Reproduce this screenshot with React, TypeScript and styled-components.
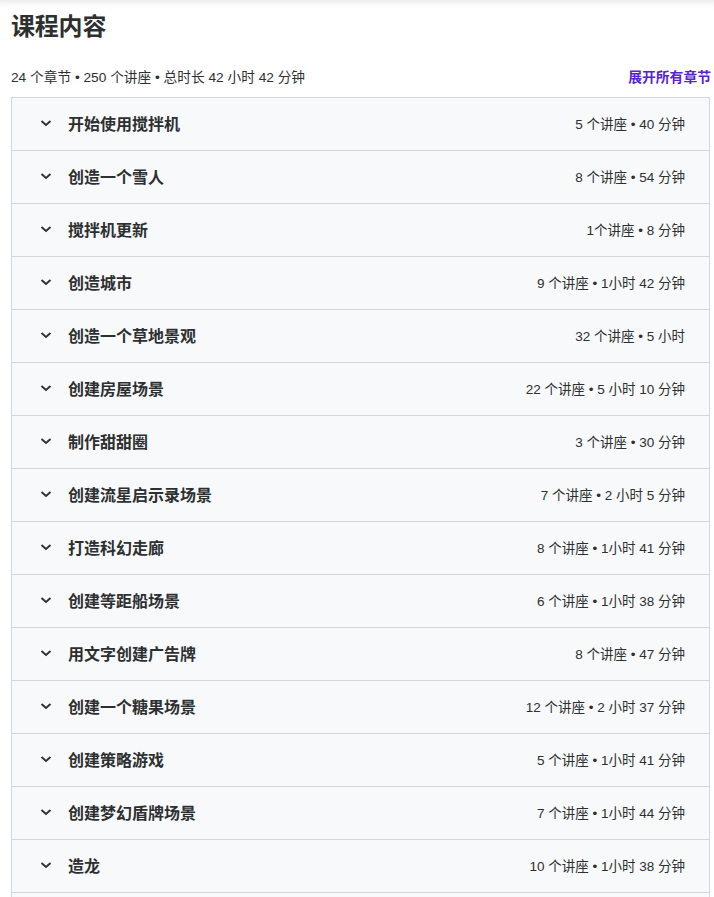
import React from "react";
import styled, { createGlobalStyle } from "styled-components";

const GlobalStyle = createGlobalStyle`
  html, body {
    margin: 0;
    padding: 0;
    background: #ffffff;
  }
  body {
    font-family: "Liberation Sans", "Noto Sans CJK SC", sans-serif;
    color: #2d2f31;
  }
`;

interface Section {
  title: string;
  meta: string;
}

const sections: Section[] = [
  { title: "开始使用搅拌机", meta: "5 个讲座 • 40 分钟" },
  { title: "创造一个雪人", meta: "8 个讲座 • 54 分钟" },
  { title: "搅拌机更新", meta: "1个讲座 • 8 分钟" },
  { title: "创造城市", meta: "9 个讲座 • 1小时 42 分钟" },
  { title: "创造一个草地景观", meta: "32 个讲座 • 5 小时" },
  { title: "创建房屋场景", meta: "22 个讲座 • 5 小时 10 分钟" },
  { title: "制作甜甜圈", meta: "3 个讲座 • 30 分钟" },
  { title: "创建流星启示录场景", meta: "7 个讲座 • 2 小时 5 分钟" },
  { title: "打造科幻走廊", meta: "8 个讲座 • 1小时 41 分钟" },
  { title: "创建等距船场景", meta: "6 个讲座 • 1小时 38 分钟" },
  { title: "用文字创建广告牌", meta: "8 个讲座 • 47 分钟" },
  { title: "创建一个糖果场景", meta: "12 个讲座 • 2 小时 37 分钟" },
  { title: "创建策略游戏", meta: "5 个讲座 • 1小时 41 分钟" },
  { title: "创建梦幻盾牌场景", meta: "7 个讲座 • 1小时 44 分钟" },
  { title: "造龙", meta: "10 个讲座 • 1小时 38 分钟" },
];

const Page = styled.div`
  box-shadow: inset 0 9px 8px -8px rgba(0, 0, 0, 0.12);
  padding: 11px 3px 0 11px;
  height: 897px;
  overflow: hidden;
  box-sizing: border-box;
`;

const Heading = styled.h2`
  margin: 0;
  font-size: 24px;
  line-height: 32px;
  font-weight: 700;
  letter-spacing: -0.2px;
`;

const SummaryBar = styled.div`
  display: flex;
  justify-content: space-between;
  align-items: center;
  margin: 19px 0 7px;
  height: 28px;
`;

const Summary = styled.span`
  font-size: 13.7px;
`;

const ExpandAll = styled.button`
  border: none;
  background: none;
  padding: 0;
  color: #5624d0;
  font-family: inherit;
  font-size: 13.8px;
  font-weight: 700;
  cursor: pointer;
`;

const Accordion = styled.div`
  border: 1px solid #d1d7dc;
  border-bottom: none;
  width: 699px;
  box-sizing: border-box;
  background: #f7f9fa;
  min-height: 900px;
`;

const Row = styled.div`
  display: flex;
  align-items: center;
  height: 53px;
  box-sizing: border-box;
  padding: 0 24px 2px;
  background: #f7f9fa;
  border-bottom: 1px solid #d1d7dc;
`;

const Chevron = styled.span`
  display: flex;
  width: 16px;
  height: 16px;
  align-items: center;
  justify-content: center;
  margin: 0 14px 0 2px;
  flex-shrink: 0;
`;

const Title = styled.span`
  flex: 1;
  font-size: 16px;
  font-weight: 700;
`;

const Meta = styled.span`
  font-size: 13.5px;
  white-space: nowrap;
`;

const ChevronIcon = () => (
  <svg width="12" height="8" viewBox="0 0 12 8" fill="none">
    <path d="M1.5 2 L6 6 L10.5 2" stroke="#2d2f31" strokeWidth="1.8" />
  </svg>
);

export default function App() {
  return (
    <>
      <GlobalStyle />
      <Page>
        <Heading>课程内容</Heading>
        <SummaryBar>
          <Summary>24 个章节 • 250 个讲座 • 总时长 42 小时 42 分钟</Summary>
          <ExpandAll>展开所有章节</ExpandAll>
        </SummaryBar>
        <Accordion>
          {sections.map((s) => (
            <Row key={s.title}>
              <Chevron>
                <ChevronIcon />
              </Chevron>
              <Title>{s.title}</Title>
              <Meta>{s.meta}</Meta>
            </Row>
          ))}
        </Accordion>
      </Page>
    </>
  );
}
